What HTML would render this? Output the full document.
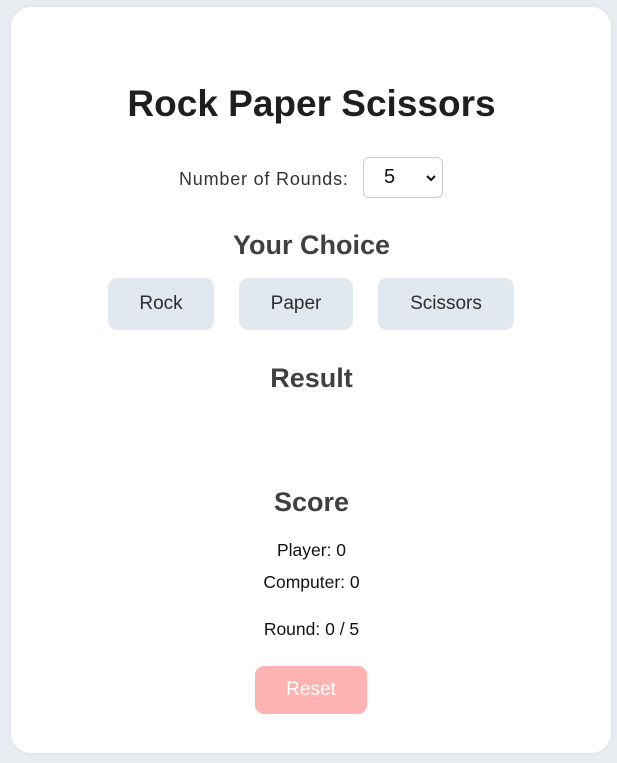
<!DOCTYPE html>
<html><head><style>
body{margin:0;width:617px;height:763px;background:#e9ecf1;font-family:"Liberation Sans",sans-serif;position:relative;overflow:hidden}
.card{position:absolute;left:11px;top:7px;width:600px;height:746px;background:#fff;border-radius:20px;box-shadow:0 0 8px rgba(0,0,0,.05)}
.c{position:absolute;left:3px;width:617px;text-align:center;white-space:nowrap}
.b{position:absolute;top:278px;height:52px;background:#e2e8f0;border-radius:9px;font-size:19px;color:#2d2d2d;line-height:52px;text-align:center}
</style></head><body>
<div class="card"></div>
<div class="c" style="top:81px;font-size:37px;font-weight:bold;color:#1f1f1f;line-height:46px">Rock Paper Scissors</div>
<div style="position:absolute;left:179px;top:168px;font-size:18px;letter-spacing:0.8px;color:#333;line-height:22px">Number of Rounds:</div>
<div style="position:absolute;left:363px;top:157px;width:78px;height:39px;border:1px solid #ccc;border-radius:6px;background:#fff">
<span style="position:absolute;left:20px;top:8px;font-size:20px;color:#111">5</span>
<svg style="position:absolute;left:62px;top:16px" width="10" height="8" viewBox="0 0 10 8"><path d="M1 2l4 4 4-4" stroke="#111" stroke-width="2" fill="none"/></svg>
</div>
<div class="c" style="top:229px;font-size:27px;font-weight:bold;color:#404040;line-height:32px">Your Choice</div>
<div class="b" style="left:108px;width:106px">Rock</div>
<div class="b" style="left:239px;width:114px">Paper</div>
<div class="b" style="left:378px;width:136px">Scissors</div>
<div class="c" style="top:362px;font-size:27px;font-weight:bold;color:#404040;line-height:32px">Result</div>
<div class="c" style="top:486px;font-size:27px;font-weight:bold;color:#404040;line-height:32px">Score</div>
<div class="c" style="top:539px;font-size:17.5px;color:#111;line-height:22px">Player: 0</div>
<div class="c" style="top:571px;font-size:17.5px;color:#111;line-height:22px">Computer: 0</div>
<div class="c" style="top:618px;font-size:17.5px;color:#111;line-height:22px">Round: 0 / 5</div>
<div style="position:absolute;left:255px;top:666px;width:112px;height:48px;background:#feb2b2;border-radius:9px;color:#fff;font-size:19px;line-height:48px;text-align:center">Reset</div>
</body></html>
